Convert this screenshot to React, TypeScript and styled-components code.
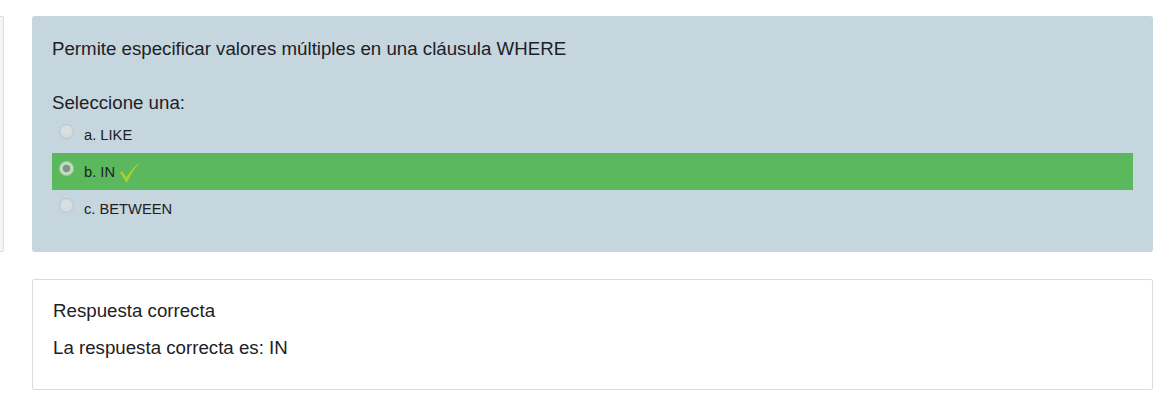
import React from "react";
import styled, { createGlobalStyle } from "styled-components";

const Global = createGlobalStyle`
  html, body { margin: 0; padding: 0; background: #fff; }
  body { font-family: "Liberation Sans", Arial, sans-serif; color: #1d2125; }
`;

const Page = styled.div`
  display: flex;
  align-items: flex-start;
  gap: 28px;
  padding: 16px 23px 0 0;
`;

const SideStub = styled.div`
  width: 3px;
  height: 234px;
  background: #f5f5f5;
  border: 1px solid #dcdcdc;
  border-left: none;
  border-radius: 0 2px 2px 0;
`;

const Column = styled.div`
  flex: 1;
  display: flex;
  flex-direction: column;
  gap: 27px;
`;

const Formulation = styled.div`
  background: #c5d6de;
  border-radius: 3px;
  padding: 19px 20px 25px 20px;
`;

const QText = styled.div`
  font-size: 18.7px;
  line-height: 27px;
  margin-bottom: 27px;
`;

const Prompt = styled.div`
  font-size: 18.7px;
  line-height: 27px;
`;

const Options = styled.div`
  display: flex;
  flex-direction: column;
`;

const Option = styled.div<{ $correct?: boolean }>`
  display: flex;
  align-items: center;
  height: 37px;
  padding-left: 7px;
  background: ${(p) => (p.$correct ? "#5cb85c" : "transparent")};
  font-size: 14.7px;
`;

const Radio = styled.span<{ $checked?: boolean }>`
  width: 15px;
  height: 15px;
  border-radius: 50%;
  box-sizing: border-box;
  background: ${(p) =>
    p.$checked
      ? "radial-gradient(circle, #7f9482 0 3.4px, #b9d6b9 4px, #c4dcc4 5.5px)"
      : "radial-gradient(circle at 50% 40%, #dbe2e6, #cfd7dc)"};
  border: 1px solid ${(p) => (p.$checked ? "#a2cca2" : "#b9c3c8")};
  margin-right: 10px;
  margin-top: -6px;
  flex-shrink: 0;
`;

const Label = styled.span`
  color: #1d2125;
`;

const Check = styled.svg`
  margin-left: 4px;
  margin-top: 3px;
`;

const Feedback = styled.div`
  border: 1px solid #dcdcdc;
  border-radius: 2px;
  background: #fff;
  padding: 17px 20px 28px 20px;
  font-size: 18.7px;
`;

const FeedbackLine = styled.div`
  line-height: 27px;
  & + & { margin-top: 10px; }
`;

export default function App() {
  return (
    <>
      <Global />
      <Page>
        <SideStub />
        <Column>
          <Formulation>
            <QText>Permite especificar valores múltiples en una cláusula WHERE</QText>
            <Prompt>Seleccione una:</Prompt>
            <Options>
              <Option>
                <Radio />
                <Label>a. LIKE</Label>
              </Option>
              <Option $correct>
                <Radio $checked />
                <Label>b. IN</Label>
                <Check width="20" height="20" viewBox="0 0 20 20">
                  <path
                    d="M1 9.5 L3.4 8.4 L7.4 14.2 Q12 6.5 19 0.5 L19.4 1.4 Q13 8 8.3 19 L7 19 Z"
                    fill="#a8d12e"
                  />
                </Check>
              </Option>
              <Option>
                <Radio />
                <Label>c. BETWEEN</Label>
              </Option>
            </Options>
          </Formulation>
          <Feedback>
            <FeedbackLine>Respuesta correcta</FeedbackLine>
            <FeedbackLine>La respuesta correcta es: IN</FeedbackLine>
          </Feedback>
        </Column>
      </Page>
    </>
  );
}
